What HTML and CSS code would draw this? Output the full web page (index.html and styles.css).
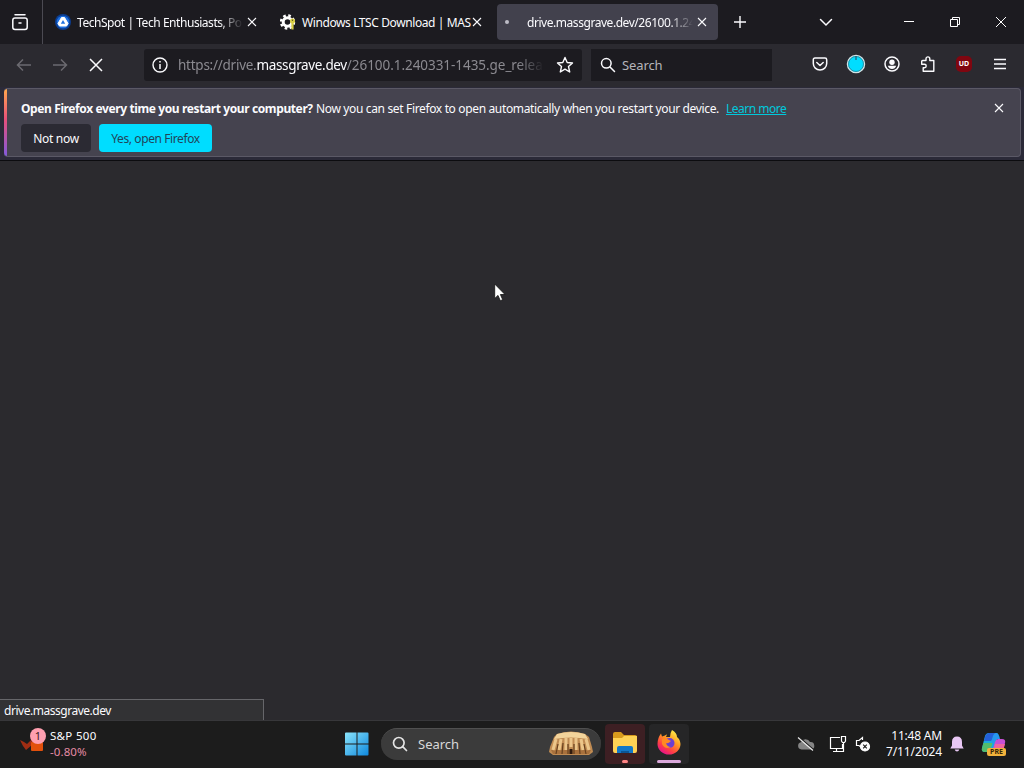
FILE: index.html
```html
<!DOCTYPE html>
<html lang="en">
<head>
    <meta charset="UTF-8">
    <meta name="viewport" content="width=device-width, initial-scale=1.0">
    <title>drive.massgrave.dev</title>
    <link rel="stylesheet" href="styles.css">
</head>
<body>
    <div id="tab-strip">
        <div class="firefox-view">
            <svg width="18" height="18" viewBox="0 0 18 18" fill="none" stroke="#fbfbfe" stroke-width="1.5" stroke-linecap="round">
                <path d="M4 1.8h10"/>
                <rect x="1.8" y="5" width="14.4" height="11.5" rx="2.2"/>
                <path d="M8 10h2"/>
            </svg>
        </div>
        <div class="tab">
            <svg class="favicon" width="16" height="16" viewBox="0 0 16 16">
                <circle cx="8" cy="8" r="8" fill="#0b3d91"/>
                <circle cx="8" cy="8" r="6.3" fill="#1c6fe0"/>
                <path d="M6.5 3.5h3L13 9.5 11.5 12h-7L3 9.5z" fill="#fff" stroke="#fff" stroke-linejoin="round"/>
                <path d="M8 6l2.2 3.8H5.8z" fill="#1c6fe0"/>
            </svg>
            <span class="tab-label faded">TechSpot | Tech Enthusiasts, Po</span>
            <svg class="tab-close" width="10" height="10" viewBox="0 0 10 10"><path d="M1 1l8 8M9 1L1 9"/></svg>
        </div>
        <div class="tab">
            <svg class="favicon" width="16" height="16" viewBox="0 0 16 16">
                <circle cx="7.5" cy="8" r="4.3" fill="none" stroke="#fff" stroke-width="3"/>
                <circle cx="7.5" cy="8" r="6.5" fill="none" stroke="#fff" stroke-width="2.4" stroke-dasharray="2.6 2.5"/>
                <circle cx="12.5" cy="7" r="2.5" fill="#d9cf45"/>
                <path d="M12.5 8v7.5" stroke="#d9cf45" stroke-width="2.2"/>
                <circle cx="12.5" cy="6.3" r=".7" fill="#55501c"/>
            </svg>
            <span class="tab-label wide">Windows LTSC Download | MAS</span>
            <svg class="tab-close" width="10" height="10" viewBox="0 0 10 10"><path d="M1 1l8 8M9 1L1 9"/></svg>
        </div>
        <div class="tab selected">
            <span class="loading-dot"></span>
            <span class="tab-label faded">drive.massgrave.dev/26100.1.24</span>
            <svg class="tab-close" width="10" height="10" viewBox="0 0 10 10"><path d="M1 1l8 8M9 1L1 9"/></svg>
        </div>
        <svg class="new-tab" width="12" height="12" viewBox="0 0 12 12"><path d="M6 0v12M0 6h12" stroke="#fbfbfe" stroke-width="1.4"/></svg>
        <svg class="all-tabs" width="14" height="9" viewBox="0 0 14 9"><path d="M1.5 1.5L7 7l5.5-5.5" fill="none" stroke="#fbfbfe" stroke-width="1.5" stroke-linecap="round"/></svg>
        <div class="window-buttons">
            <svg width="12" height="12" viewBox="0 0 12 12"><path d="M1 5.5h10"/></svg>
            <svg width="12" height="12" viewBox="0 0 12 12"><path d="M1.5 3.5h7v7h-7zM3.5 3.5v-2h7v7h-2"/></svg>
            <svg width="12" height="12" viewBox="0 0 12 12"><path d="M1 1l10 10M11 1L1 11"/></svg>
        </div>
    </div>

    <div id="toolbar">
        <div class="nav-buttons">
            <svg class="disabled" width="16" height="16" viewBox="0 0 16 16"><path d="M15 8H1.5M7 2.5L1.5 8 7 13.5"/></svg>
            <svg class="disabled" width="16" height="16" viewBox="0 0 16 16"><path d="M1 8h13.5M9 2.5L14.5 8 9 13.5"/></svg>
            <svg width="16" height="16" viewBox="0 0 16 16"><path d="M2 2l12 12M14 2L2 14"/></svg>
        </div>
        <div class="url-bar">
            <svg width="16" height="16" viewBox="0 0 16 16" fill="none" stroke="#fbfbfe" stroke-width="1.4">
                <circle cx="8" cy="8" r="7"/>
                <path d="M8 7v5M8 4v1.5" stroke-width="1.5"/>
            </svg>
            <span class="url">https://drive.<b>massgrave.dev</b><span class="path">/26100.1.240331-1435.ge_relea</span></span>
            <svg width="18" height="18" viewBox="0 0 18 18" fill="none" stroke="#fbfbfe" stroke-width="1.4" stroke-linejoin="round">
                <path d="M9 1.5l2.2 5 5.3.5-4 3.6 1.2 5.4L9 13.2 4.3 16l1.2-5.4-4-3.6 5.3-.5z"/>
            </svg>
        </div>
        <div class="search-bar">
            <svg width="16" height="16" viewBox="0 0 16 16" fill="none" stroke="#fbfbfe" stroke-width="1.5" stroke-linecap="round">
                <circle cx="6.3" cy="6.3" r="4.8"/><path d="M10 10l4.5 4.5"/>
            </svg>
            <span>Search</span>
        </div>
        <div class="toolbar-icons">
            <svg width="16" height="16" viewBox="0 0 16 16" fill="none" stroke="#fbfbfe" stroke-width="1.5" stroke-linecap="round" stroke-linejoin="round">
                <path d="M3 2h10q1.7 0 1.7 1.7V7.5a6.7 6.5 0 0 1-13.4 0V3.7Q1.3 2 3 2z"/>
                <path d="M4.8 6.5L8 9.5l3.2-3"/>
            </svg>
            <svg width="20" height="20" viewBox="0 0 20 20">
                <circle cx="10" cy="10" r="8.6" fill="#00ddff" stroke="#d3e2e5" stroke-width="1.3"/>
                <circle cx="10" cy="10" r="7.5" fill="none" stroke="#2c7f91" stroke-width=".8"/>
                <path d="M10 2v4" stroke="#24576a" stroke-width="1.2"/>
            </svg>
            <svg width="16" height="16" viewBox="0 0 16 16">
                <circle cx="8" cy="8" r="7" fill="none" stroke="#fbfbfe" stroke-width="1.5"/>
                <circle cx="8" cy="6.2" r="2.7" fill="#fbfbfe"/>
                <path d="M3.8 9.8h8.4Q11 13 8 13T3.8 9.8z" fill="#fbfbfe"/>
            </svg>
            <svg width="16" height="16" viewBox="0 0 16 16" fill="none" stroke="#fbfbfe" stroke-width="1.4" stroke-linejoin="round">
                <path d="M6 4.500V2.800a1.900 1.900 0 0 1 3.800 0v1.700h4v10.700H3.200v-3.500h1.300a1.700 1.700 0 0 0 0-3.400H1.700V5.500q0-1 1-1z"/>
            </svg>
            <span class="ublock">UD</span>
            <svg width="14" height="14" viewBox="0 0 14 14"><path d="M1 2.5h12M1 7h12M1 11.5h12" stroke="#fbfbfe" stroke-width="1.4"/></svg>
        </div>
    </div>

    <div id="notification-area">
        <div class="notification">
            <p class="message"><strong>Open Firefox every time you restart your computer?</strong> <span>Now you can set Firefox to open automatically when you restart your device.</span> <a href="#">Learn more</a></p>
            <div class="buttons">
                <button class="secondary">Not now</button>
                <button class="primary">Yes, open Firefox</button>
            </div>
            <svg class="dismiss" width="10" height="10" viewBox="0 0 10 10"><path d="M1 1l8 8M9 1L1 9" stroke="#fbfbfe" stroke-width="1.1"/></svg>
        </div>
    </div>

    <main id="page">
        <svg class="cursor" width="12" height="19" viewBox="0 0 12 19">
            <path d="M.7 1v14.5l3.300-3.100 2.300 5.300 2.400-1-2.300-5.200H11z" fill="#fff" stroke="#111" stroke-width=".8"/>
        </svg>
        <div class="status-panel"><span>drive.massgrave.dev</span></div>
    </main>

    <div id="taskbar">
        <div class="widget">
            <svg width="26" height="26" viewBox="0 0 26 26">
                <path d="M0 12l4 2 3 2 5-5v6l-6 5-3-4z" fill="#a12d13"/>
                <rect x="11" y="14" width="12" height="9" rx="1" fill="#e2500c"/>
                <circle cx="18" cy="8" r="8" fill="#ff9fb0"/>
                <text x="18" y="12" text-anchor="middle" font-size="11" fill="#3a1a22">1</text>
            </svg>
            <div class="stock">
                <span>S&amp;P 500</span>
                <span class="down">-0.80%</span>
            </div>
        </div>
        <svg class="start" width="24" height="24" viewBox="0 0 24 24">
            <defs>
                <linearGradient id="win" x1="0" y1="0" x2="24" y2="24" gradientUnits="userSpaceOnUse">
                    <stop offset="0" stop-color="#8ce5fb"/>
                    <stop offset="1" stop-color="#0b86dd"/>
                </linearGradient>
            </defs>
            <path d="M1 .5h10.5v11H0v-10q0-1 1-1zM12.5.5h10q1 0 1 1v10h-11zM0 12.5h11.5v11H1q-1 0-1-1zM12.5 12.5h11v10q0 1-1 1h-10z" fill="url(#win)"/>
        </svg>
        <div class="taskbar-search">
            <svg width="16" height="16" viewBox="0 0 16 16" fill="none" stroke="#e4e4e4" stroke-width="1.7" stroke-linecap="round">
                <circle cx="6.8" cy="6.8" r="5.3"/><path d="M10.7 10.7L14.5 14.5"/>
            </svg>
            <span>Search</span>
            <svg class="highlight" width="46" height="28" viewBox="0 0 46 28">
                <path d="M9 4Q23-1 37 4l4 3 3 10 1 5-4 3H5l-4-3 1-5L6 7z" fill="#c08b52"/>
                <path d="M9 4Q23 0 37 4l3 5Q23 6 6 9z" fill="#f3d49b"/>
                <path d="M3 20h40l-2 4H5z" fill="#a8713d"/>
                <path d="M8 9L5 20M13 9l-2 11M18 8v12M23 8v9M28 8v12M33 9l2 11M38 9l3 11" stroke="#ecc68a" stroke-width="3"/>
                <path d="M10 14L8 24M15 13l-1 11M20 14v10M26 14v10M31 13l1 11M36 14l2 10" stroke="#65401f" stroke-width="1.2"/>
                <path d="M23 19v5" stroke="#2e1a0e" stroke-width="3"/>
            </svg>
        </div>
        <div class="app explorer">
            <svg width="26" height="24" viewBox="0 0 26 24">
                <path d="M1 3q0-2 2-2h6l3 3h11q2 0 2 2v6H1z" fill="#d99a1d"/>
                <path d="M1 7h9l2-2h13v15q0 2-2 2H3q-2 0-2-2z" fill="#ffd155"/>
                <path d="M5 22v-5q0-2 2-2h12q2 0 2 2v5z" fill="#1177c8"/>
                <path d="M9 22v-2h8v2z" fill="#0b5594"/>
            </svg>
            <i></i>
        </div>
        <div class="app firefox">
            <svg width="24" height="26" viewBox="0 0 24 26">
                <defs>
                    <linearGradient id="fox" x1="20" y1="3" x2="6" y2="24" gradientUnits="userSpaceOnUse">
                        <stop offset="0" stop-color="#fff04a"/>
                        <stop offset=".4" stop-color="#ff9a22"/>
                        <stop offset=".75" stop-color="#ff3f45"/>
                        <stop offset="1" stop-color="#e71587"/>
                    </linearGradient>
                </defs>
                <path d="M15 1q5 3 5 7 3 2 3.5 7A11.5 10.5 0 0 1 .5 15Q.5 9 4 4.5l1 3 3-1q1-1 2-1L9 8h4q0-4 2-7z" fill="url(#fox)"/>
                <circle cx="12.5" cy="14" r="5" fill="#6c3fd1"/>
                <path d="M5 10q4-2 7 1l2 1q-3 3-5 2 1 4 5 4-6 3-9-3z" fill="#ff8a23"/>
            </svg>
            <i></i>
        </div>
        <div class="tray">
            <svg class="cloud" width="18" height="14" viewBox="0 0 18 14">
                <path d="M4.5 12.5A3.7 3.7 0 0 1 4 5.2 5 5 0 0 1 13 5a3.7 3.7 0 0 1 1 7.5z" fill="#858585"/>
                <path d="M2 0l15 13" stroke="#1c1c1c" stroke-width="1.2"/>
                <path d="M1 .5l15 13" stroke="#e8e8e8" stroke-width="1.2"/>
            </svg>
            <svg class="network" width="18" height="18" viewBox="0 0 18 18" fill="none" stroke="#fff" stroke-width="1.2">
                <path d="M11 2.5H1.5v11h12V9M7.5 13.5v3M4 16.5h8M12.5 1.5h4V6l-1 1.5h-2l-1-1.5zM14.5 7.5v9h-3"/>
            </svg>
            <svg class="volume" width="16" height="16" viewBox="0 0 16 16" fill="none" stroke="#fff" stroke-width="1.2">
                <path d="M7.5 4V1.5L4 4.5H1.5v5H4l1 1"/>
                <circle cx="10" cy="10.5" r="4.5" fill="#fff"/>
                <path d="M8.2 8.7l3.6 3.6M11.8 8.7l-3.6 3.6" stroke="#1c1c1c"/>
            </svg>
            <div class="clock">
                <span>11:48 AM</span>
                <span class="date">7/11/2024</span>
            </div>
            <svg class="bell" width="14" height="16" viewBox="0 0 14 16">
                <path d="M7 .5Q12 .5 12 6v3.5l1.7 3H.3L2 9.500V6Q2 .5 7 .5zM4.7 13.5h4.6Q8.7 15.5 7 15.5t-2.3-2z" fill="#e8c7f4"/>
            </svg>
            <div class="copilot">
                <svg width="26" height="24" viewBox="0 0 26 24">
                    <path d="M8 1h7q3 0 2 3l-4 13q-1 3-4 3H4q-4 0-3-4L4 4q1-3 4-3z" fill="#1ba8df"/>
                    <path d="M4.5 3.5Q6 1 8 1h7l-5 8H3z" fill="#2460d8"/>
                    <path d="M2.5 11h9l-2 7q-1 2-3 2H4q-4 0-3-4z" fill="#52bd6c"/>
                    <path d="M17 7h4q4 0 3 4l-2 7q-1 2-4 2h-7l3-10q1-3 3-3z" fill="#c750d5"/>
                    <path d="M15 1q3 0 4 6h-3q-2 0-3 3l-1 3-1-5q1-7 4-7z" fill="#2796ee"/>
                    <path d="M14 12h10l-2 7h-9z" fill="#f0659c"/>
                </svg>
                <span>PRE</span>
            </div>
        </div>
    </div>
</body>
</html>
```

FILE: styles.css
```css
* {
    box-sizing: border-box;
}

body {
    font-family: "Noto Sans", "Open Sans", sans-serif;
    font-size: 12px;
    margin: 0;
    width: 1024px;
    height: 768px;
    overflow: hidden;
    display: flex;
    flex-direction: column;
    background: #2b2a33;
    color: #fbfbfe;
}

svg {
    display: block;
    flex: none;
}

/* tabs */
#tab-strip {
    height: 44px;
    flex: none;
    display: flex;
    align-items: center;
    background: #1c1b20;
}

.firefox-view {
    width: 43px;
    height: 44px;
    padding-left: 11px;
    margin-right: 4px;
    display: flex;
    align-items: center;
    border-right: 1px solid #4b4a52;
}

.tab {
    width: 221px;
    height: 36px;
    margin-right: 4px;
    padding: 0 11px 0 8px;
    display: flex;
    align-items: center;
    border-radius: 4px;
}

.tab.selected {
    background: #42414d;
}

.favicon {
    margin-right: 6px;
}

.tab-label {
    width: 166px;
    white-space: nowrap;
    letter-spacing: -0.45px;
}

.tab-label.wide {
    width: 170px;
    letter-spacing: -0.4px;
}

.faded {
    -webkit-mask-image: linear-gradient(to left, transparent, #000 24px);
    mask-image: linear-gradient(to left, transparent, #000 24px);
}

.tab-close {
    margin-left: auto;
    fill: none;
    stroke: #fbfbfe;
    stroke-width: 1.1;
}

.loading-dot {
    width: 4px;
    height: 4px;
    margin-right: 18px;
    border-radius: 50%;
    background: #bdbcc6;
}

.new-tab {
    margin-left: 12px;
}

.all-tabs {
    margin-left: 73px;
}

.window-buttons {
    display: flex;
    gap: 34px;
    margin-left: auto;
    padding-right: 17px;
}

.window-buttons svg {
    fill: none;
    stroke: #fff;
}

/* toolbar */
#toolbar {
    height: 43px;
    flex: none;
    display: flex;
    align-items: center;
    padding-bottom: 2px;
    background: #2b2a30;
}

.nav-buttons {
    width: 144px;
    padding-left: 16px;
    display: flex;
    gap: 20px;
}

.nav-buttons svg {
    fill: none;
    stroke: #fbfbfe;
    stroke-width: 1.5;
}

.nav-buttons .disabled {
    stroke: #6b6a70;
}

.url-bar, .search-bar {
    height: 32px;
    display: flex;
    align-items: center;
    background: #1c1b20;
}

.url-bar {
    width: 438px;
    padding: 0 8px;
    border-radius: 3px;
    font-size: 13.5px;
}

.url {
    width: 367px;
    margin: 0 12px 0 10px;
    white-space: nowrap;
    letter-spacing: -0.25px;
    color: #8b8a90;
    -webkit-mask-image: linear-gradient(to left, transparent, #000 26px);
    mask-image: linear-gradient(to left, transparent, #000 26px);
}

.url b {
    font-weight: normal;
    letter-spacing: -0.35px;
    color: #fbfbfe;
}

.path {
    letter-spacing: -0.05px;
}

.search-bar {
    width: 181px;
    margin-left: 9px;
    padding-left: 9px;
    gap: 6px;
    color: #b5b4ba;
    font-size: 13px;
    letter-spacing: -0.1px;
}

.toolbar-icons {
    margin-left: auto;
    padding: 0 6px 2px 0;
    display: grid;
    grid-template-columns: repeat(6, 36px);
    place-items: center;
}

.ublock {
    width: 16px;
    height: 16px;
    border-radius: 5px;
    background: #800610;
    color: #fff;
    font-size: 7px;
    font-weight: bold;
    line-height: 16px;
    text-align: center;
}

/* notification */
#notification-area {
    height: 74px;
    flex: none;
    padding: 1px 3px 0 4px;
    border-bottom: 1px solid #0c0c0f;
    background: #2b2a38;
}

.notification {
    position: relative;
    height: 69px;
    padding: 12px 16px 0 17px;
    background: linear-gradient(#ffa84c, #e8507a 45%, #8259dd) 0 0 / 3px 100% no-repeat #45434f;
    border: 1px solid #5b5966;
    border-left: 0;
    border-radius: 4px;
}

.message {
    margin: 0;
    line-height: 16px;
    white-space: nowrap;
    display: flex;
}

.message strong {
    width: 295px;
    letter-spacing: -0.39px;
}

.message span {
    width: 410px;
    letter-spacing: -0.35px;
}

.message a {
    color: #00c8dc;
    letter-spacing: -0.5px;
}

.buttons {
    display: flex;
    gap: 8px;
    margin-top: 7px;
}

.buttons button {
    height: 28px;
    padding: 0;
    border: 0;
    border-radius: 4px;
    font: inherit;
    letter-spacing: -0.3px;
}

.secondary {
    width: 70px;
    background: #2b2a33;
    color: #fbfbfe;
}

.buttons .primary {
    width: 113px;
    background: #00ddff;
    color: #20455a;
    letter-spacing: -0.4px;
}

.dismiss {
    position: absolute;
    top: 14px;
    right: 16px;
}

/* page */
#page {
    position: relative;
    flex: 1;
    display: flex;
    align-items: flex-end;
    background: #2b2a2e;
}

.cursor {
    position: absolute;
    left: 494px;
    top: 122px;
}

.status-panel {
    width: 264px;
    height: 21px;
    padding-left: 4px;
    line-height: 22px;
    background: #323234;
    border: 1px solid #66666a;
    border-left: 0;
    border-bottom: 0;
    letter-spacing: -0.47px;
}

/* taskbar */
#taskbar {
    height: 48px;
    flex: none;
    display: flex;
    align-items: center;
    padding-bottom: 1px;
    background: #1c1c1c;
    border-top: 1px solid #37373a;
}

.widget {
    width: 345px;
    padding-left: 20px;
    display: flex;
    gap: 4px;
}

.stock {
    display: flex;
    flex-direction: column;
    line-height: 16px;
    font-size: 11.5px;
}

.stock span {
    letter-spacing: 0.3px;
}

.stock .down {
    color: #e58ba5;
    letter-spacing: 0.1px;
}

.taskbar-search {
    width: 220px;
    height: 32px;
    margin-left: 12px;
    padding: 0 7px 1px 11px;
    display: flex;
    align-items: center;
    gap: 10px;
    border-radius: 16px;
    background: #3b3b3b;
    border-top: 1px solid #505050;
    font-size: 13px;
    color: #d8d8d8;
}

.highlight {
    margin-left: auto;
}

.app {
    width: 40px;
    height: 40px;
    display: flex;
    flex-direction: column;
    align-items: center;
    justify-content: space-between;
    padding: 7px 0 1px;
    border-radius: 4px;
}

.explorer {
    margin-left: 4px;
    background: #3d1f23;
}

.firefox {
    margin-left: 4px;
    padding-top: 5px;
    background: #262627;
}

.app i {
    width: 6px;
    height: 3px;
    border-radius: 2px;
    background: #ff8585;
}

.firefox i {
    width: 24px;
    background: #dba9dc;
}

.tray {
    margin-left: auto;
    padding-right: 17px;
    display: flex;
    align-items: center;
}

.network {
    margin-left: 14px;
}

.volume {
    margin-left: 8px;
}

.clock {
    width: 71px;
    display: flex;
    flex-direction: column;
    align-items: flex-end;
    line-height: 16px;
    letter-spacing: -0.2px;
}

.clock .date {
    letter-spacing: -0.1px;
}

.bell {
    margin-left: 8px;
}

.copilot {
    position: relative;
    margin-left: 17px;
}

.copilot span {
    position: absolute;
    left: 6px;
    bottom: 0;
    width: 19px;
    height: 8px;
    border-radius: 2px;
    background: #f2b23c;
    color: #382405;
    font-size: 7px;
    font-weight: bold;
    line-height: 8px;
    text-align: center;
}
```
